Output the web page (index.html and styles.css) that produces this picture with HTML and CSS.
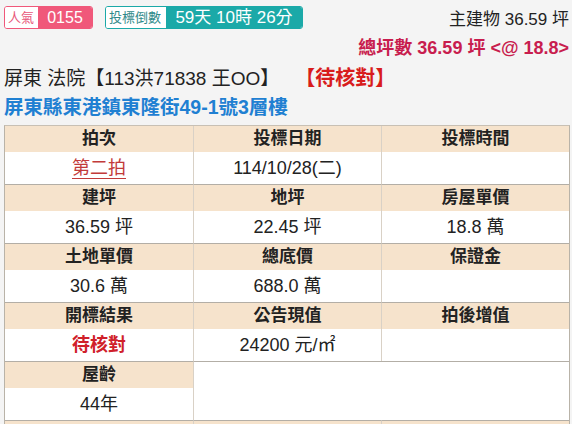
FILE: index.html
```html
<!DOCTYPE html>
<html lang="zh-Hant">
<head>
<meta charset="utf-8">
<link rel="stylesheet" href="styles.css">
</head>
<body>
<div class="page">
  <div class="top">
    <div class="badges">
      <div class="badge pink"><span class="lbl">人氣</span><span class="val">0155</span></div>
      <div class="badge teal"><span class="lbl">投標倒數</span><span class="val">59天 10時 26分</span></div>
    </div>
    <div class="stats">
      <div class="main">主建物 36.59 坪</div>
      <div class="total">總坪數 36.59 坪 &lt;@ 18.8&gt;</div>
    </div>
  </div>
  <div class="title"><span>屏東 法院【113洪71838 王OO】</span><span class="status">【待核對】</span></div>
  <div class="addr">屏東縣東港鎮東隆街49-1號3層樓</div>
  <div class="grid">
    <div class="h">拍次</div><div class="h">投標日期</div><div class="h">投標時間</div>
    <div class="v"><a class="link">第二拍</a></div><div class="v">114/10/28(二)</div><div class="v"></div>

    <div class="h sep">建坪</div><div class="h sep">地坪</div><div class="h sep">房屋單價</div>
    <div class="v">36.59 坪</div><div class="v">22.45 坪</div><div class="v">18.8 萬</div>

    <div class="h sep">土地單價</div><div class="h sep">總底價</div><div class="h sep">保證金</div>
    <div class="v">30.6 萬</div><div class="v">688.0 萬</div><div class="v"></div>

    <div class="h sep">開標結果</div><div class="h sep">公告現值</div><div class="h sep">拍後增值</div>
    <div class="v"><span class="red">待核對</span></div><div class="v">24200 元/㎡</div><div class="v"></div>

    <div class="h sep">屋齡</div><div class="blank sep"></div>
    <div class="v">44年</div>

    <div class="h sep"></div><div class="h sep"></div><div class="h sep"></div>
  </div>
</div>
</body>
</html>
```

FILE: styles.css
```css
html, body {
  margin: 0;
  padding: 0;
  background: #f4f4f4;
  height: 424px;
  overflow: hidden;
}
.page {
  padding: 0 2px 0 4px;
  font-family: "Liberation Sans", "Noto Sans CJK TC", sans-serif;
  color: #222;
}
.top {
  display: flex;
  justify-content: space-between;
  align-items: flex-start;
  padding-top: 6px;
}
.badges {
  display: flex;
  gap: 12px;
}
.badge {
  display: flex;
  height: 23px;
  box-sizing: border-box;
  border-radius: 3px;
  overflow: hidden;
  border: 1px solid;
}
.badge .lbl {
  background: #fff;
  font-size: 13px;
  line-height: 21px;
  padding: 0 3px 0 3px;
}
.badge .val {
  color: #fff;
  line-height: 21px;
}
.pink { border-color: #f0587a; }
.pink .lbl { color: #e8577a; width: 27px; }
.pink .val { background: #f0587a; font-size: 16px; width: 54px; text-align: center; }
.teal { border-color: #1ba9a8; }
.teal .lbl { color: #2f8a8a; width: 54px; }
.teal .val { background: #1ba9a8; font-size: 17px; width: 136px; text-align: center; }
.stats {
  text-align: right;
  padding-right: 1px;
}
.main {
  font-size: 17px;
  line-height: 28px;
}
.total {
  font-size: 18px;
  line-height: 28px;
  font-weight: bold;
  color: #c81d4e;
}
.title {
  font-size: 19px;
  line-height: 28px;
  margin-top: 2px;
}
.title .status {
  color: #d81c1c;
  font-size: 20px;
  font-weight: bold;
  margin-left: 26px;
}
.addr {
  font-size: 19.5px;
  line-height: 28px;
  font-weight: bold;
  color: #1f80d2;
}
.grid {
  margin-top: 4px;
  display: grid;
  grid-template-columns: repeat(3, 1fr);
  border-left: 1px solid #b9b3a8;
  border-right: 1px solid #b9b3a8;
  border-top: 1px solid #c8c0b4;
  background: #fff;
}
.grid > div:nth-child(3n+2),
.grid > div:nth-child(3n+3) {
  border-left: 1px solid #d9d1c6;
}
.h {
  background: #f6e3cc;
  font-weight: bold;
  font-size: 17px;
  line-height: 26px;
  height: 26px;
  text-align: center;
}
.v {
  background: #fff;
  font-size: 18px;
  line-height: 32px;
  height: 32px;
  text-align: center;
}
.sep {
  border-top: 1px solid #b3aea6;
}
.blank {
  grid-column: 2 / 4;
  grid-row: span 2;
  background: #fff;
  border-left: 1px solid #d9d1c6 !important;
}
.grid > .blank + .v {
  border-left: none;
}
.link {
  color: #c23a3a;
  text-decoration: underline;
  text-underline-offset: 4px;
}
.red {
  color: #d0202a;
  font-weight: bold;
}
```
